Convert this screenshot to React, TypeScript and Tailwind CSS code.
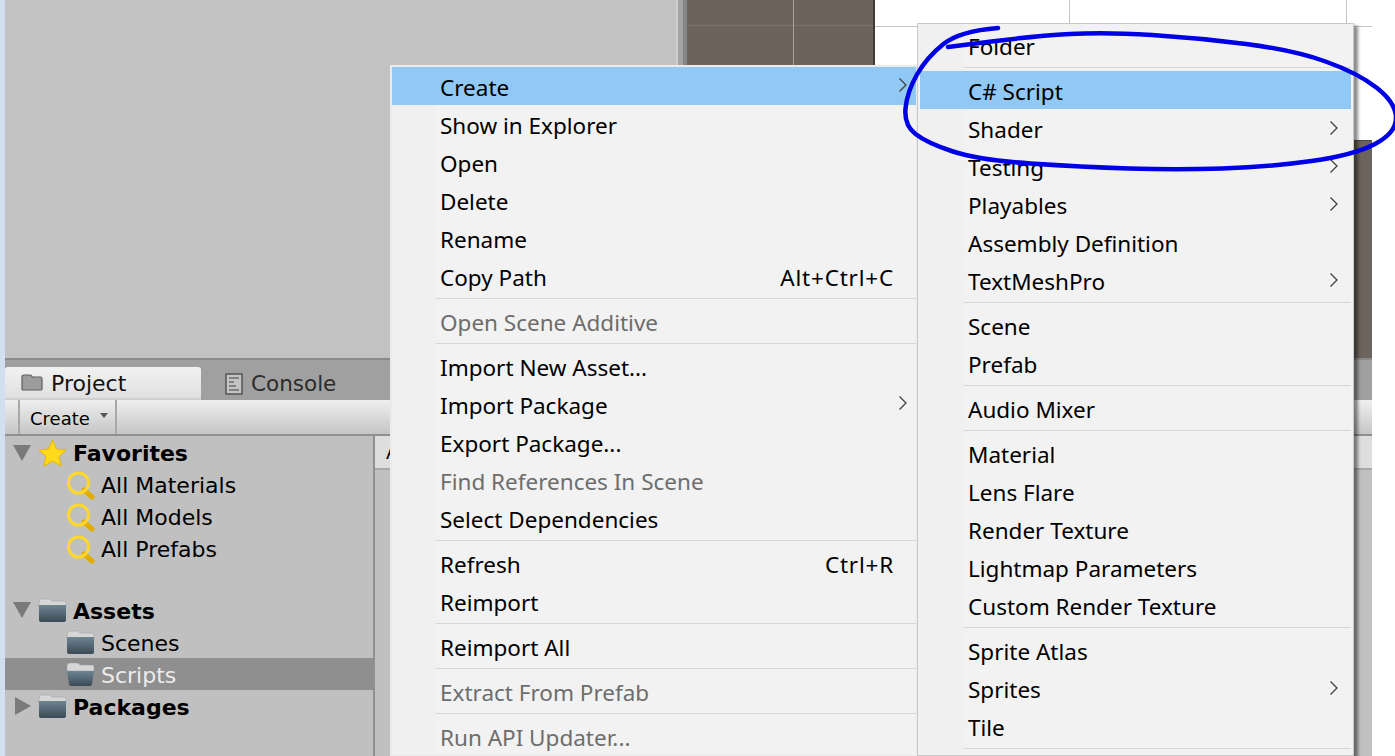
import React from 'react';

type MenuItem = { label?: string; shortcut?: string; arrow?: boolean; disabled?: boolean; active?: boolean; sep?: boolean };

const mainItems: MenuItem[] = [
    { label: 'Create', arrow: true, active: true },
    { label: 'Show in Explorer' },
    { label: 'Open' },
    { label: 'Delete' },
    { label: 'Rename' },
    { label: 'Copy Path', shortcut: 'Alt+Ctrl+C' },
    { sep: true },
    { label: 'Open Scene Additive', disabled: true },
    { sep: true },
    { label: 'Import New Asset...' },
    { label: 'Import Package', arrow: true },
    { label: 'Export Package...' },
    { label: 'Find References In Scene', disabled: true },
    { label: 'Select Dependencies' },
    { sep: true },
    { label: 'Refresh', shortcut: 'Ctrl+R' },
    { label: 'Reimport' },
    { sep: true },
    { label: 'Reimport All' },
    { sep: true },
    { label: 'Extract From Prefab', disabled: true },
    { sep: true },
    { label: 'Run API Updater...', disabled: true },
];

const subItems: MenuItem[] = [
    { label: 'Folder' },
    { sep: true },
    { label: 'C# Script', active: true },
    { label: 'Shader', arrow: true },
    { label: 'Testing', arrow: true },
    { label: 'Playables', arrow: true },
    { label: 'Assembly Definition' },
    { label: 'TextMeshPro', arrow: true },
    { sep: true },
    { label: 'Scene' },
    { label: 'Prefab' },
    { sep: true },
    { label: 'Audio Mixer' },
    { sep: true },
    { label: 'Material' },
    { label: 'Lens Flare' },
    { label: 'Render Texture' },
    { label: 'Lightmap Parameters' },
    { label: 'Custom Render Texture' },
    { sep: true },
    { label: 'Sprite Atlas' },
    { label: 'Sprites', arrow: true },
    { label: 'Tile' },
    { sep: true },
];

// hand drawn circle round the C# Script entry, in page coordinates
const scribble: [number, number][] = [
    [998, 28], [960, 31], [927, 57], [907, 92], [904, 125], [927, 143], [979, 160], [1082, 167],
    [1176, 170], [1269, 167], [1354, 155], [1396, 133], [1396, 103], [1358, 73], [1293, 50],
    [1199, 38], [1105, 32], [1035, 36], [948, 47],
];

const scribblePath = () => {
    let d = `M${scribble[0][0]} ${scribble[0][1]}`;
    for (let i = 1; i < scribble.length - 1; i++) {
        const [x, y] = scribble[i];
        const [nx, ny] = scribble[i + 1];
        d += ` Q${x} ${y} ${(x + nx) / 2} ${(y + ny) / 2}`;
    }
    const last = scribble[scribble.length - 1];
    return `${d} L${last[0]} ${last[1]}`;
};

const Chevron = () => (
    <svg width="10" height="16" viewBox="0 0 10 16" fill="none" stroke="#404040" strokeWidth="1.3">
        <path d="M1.5 1.5 L8 8 L1.5 14.5" />
    </svg>
);

const Menu: React.FC<{ items: MenuItem[]; className: string; arrowClass: string }> = ({ items, className, arrowClass }) => (
    <div className={className}>
        {items.map((item, i) =>
            item.sep ? (
                <div key={i} className="h-[7px] flex items-center ml-[44px]">
                    <div className="h-px w-full bg-[#d7d7d7]" />
                </div>
            ) : (
                <div
                    key={i}
                    className={`relative h-[38px] pl-12 flex items-center text-[22.5px] leading-none ${item.active ? 'bg-[#90c8f6]' : ''} ${item.disabled ? 'text-[#6d6d6d]' : 'text-black'}`}
                >
                    <span className="relative top-[2px]">{item.label}</span>
                    {item.shortcut && <span className="absolute right-[22px] top-[10px] tracking-[0.8px]">{item.shortcut}</span>}
                    {item.arrow && (
                        <span className={arrowClass}>
                            <Chevron />
                        </span>
                    )}
                </div>
            )
        )}
    </div>
);

const FolderIcon: React.FC<{ id: string; open?: boolean }> = ({ id, open }) => (
    <svg width="29" height="25" viewBox="0 0 29 25" className="shrink-0">
        <defs>
            <linearGradient id={id} x1="0" y1="0" x2="0" y2="1">
                <stop offset="0" stopColor="#6d8594" />
                <stop offset="1" stopColor="#3c4a54" />
            </linearGradient>
        </defs>
        <path d="M1 4 Q1 1 4 1 H11 Q13 1 14 3 H26 Q28 3 28 5 V9 H1 Z" fill="#d6d6d6" stroke="#9a9a9a" strokeWidth="0.5" />
        {open ? (
            <path d="M1 9 H28 L26 22 Q26 24 24 24 H5 Q3 24 3 22 Z" fill={`url(#${id})`} />
        ) : (
            <path d="M1 7 H28 V22 Q28 24 26 24 H3 Q1 24 1 22 Z" fill={`url(#${id})`} />
        )}
    </svg>
);

const SearchIcon = () => (
    <svg width="29" height="29" viewBox="0 0 29 29" fill="none" className="shrink-0">
        <path d="M18 19 L26 26" stroke="#e0ac00" strokeWidth="5" strokeLinecap="round" />
        <circle cx="12.5" cy="12" r="10" stroke="#ffd82a" strokeWidth="3" />
    </svg>
);

const StarIcon = () => (
    <svg width="29" height="28" viewBox="0 0 29 28" className="shrink-0">
        <path d="M14.5 1 L18.6 10 L28 11 L21 17.6 L23.2 27 L14.5 22.2 L5.8 27 L8 17.6 L1 11 L10.4 10 Z" fill="#ffd91c" stroke="#e8b400" strokeWidth="1" />
    </svg>
);

const TriDown = () => (
    <svg width="18" height="16" viewBox="0 0 18 16" className="shrink-0">
        <path d="M0 0 H18 L9 16 Z" fill="#7a7a7a" />
    </svg>
);

const TriRight = () => (
    <svg width="16" height="18" viewBox="0 0 16 18" className="ml-[2px] shrink-0">
        <path d="M0 0 L16 9 L0 18 Z" fill="#7a7a7a" />
    </svg>
);

const TreeRow: React.FC<{ indent: number; tri?: React.ReactNode; icon: React.ReactNode; label: string; bold?: boolean; selected?: boolean; lower?: boolean }> = ({ indent, tri, icon, label, bold, selected, lower }) => (
    <div className={`h-8 flex items-center ${selected ? 'bg-[#8f8f8f] text-[#ececec]' : 'text-black'}`}>
        <div className={`${indent === 0 ? 'w-[33px] pl-2' : 'w-[61px]'} shrink-0 flex items-center`}>{tri}</div>
        {icon}
        <span className={`relative text-[22px] leading-none ml-[6px] ${lower ? 'top-[2px]' : 'top-px'} ${bold ? 'font-bold' : ''}`}>{label}</span>
    </div>
);

export default function App() {
    return (
        <div className="relative w-[1395px] h-[756px] overflow-hidden flex bg-white font-['DejaVu_Sans',sans-serif]">
            <div className="w-[5px] shrink-0 bg-[#d3deef]" />
            <div className="w-[1367px] shrink-0 flex flex-col">
                {/* top: scene and game views */}
                <div className="h-[358px] shrink-0 flex">
                    <div className="w-[673px] shrink-0 bg-[#c2c2c2] border-r-2 border-[#d0d0d0]" />
                    <div className="w-[5px] shrink-0 bg-[#a3a3a3]" />
                    <div className="w-[4px] shrink-0 bg-[#858585]" />
                    <div className="relative w-[188px] shrink-0 bg-[#6b635c] border-r-2 border-[#3f3b38]">
                        <div className="h-[26px] border-b border-[#7a736d]" />
                        <div className="absolute left-[106px] top-0 bottom-0 w-px bg-[#a8a4a0]" />
                    </div>
                    <div className="flex-1 flex flex-col">
                        <div className="relative h-[140px] bg-white">
                            <div className="h-[27px] border-b border-[#c4c4c4]" />
                            <div className="absolute left-[194px] top-0 h-[27px] w-px bg-[#c4c4c4]" />
                            <div className="absolute left-[471px] top-0 h-[27px] w-px bg-[#c4c4c4]" />
                        </div>
                        <div className="flex-1 bg-[#6b635c] border-t border-[#4d4844]" />
                    </div>
                </div>
                {/* tab strip */}
                <div className="h-[42px] shrink-0 bg-[#a0a0a0] border-t-2 border-[#8a8a8a] flex items-end">
                    <div className="w-[196px] h-[33px] rounded-t-[3px] bg-linear-to-b from-[#f2f2f2] to-[#e0e0e0] flex items-center pl-[16px] border-b-2 border-[#cfcfcf]">
                        <svg width="22" height="17" viewBox="0 0 22 17">
                            <path d="M1 3 Q1 1 3 1 H9 Q11 1 11 3 H20 Q21 3 21 5 V15 Q21 16 20 16 H2 Q1 16 1 15 Z" fill="#9c9c9c" stroke="#5f5f5f" strokeWidth="1.2" />
                        </svg>
                        <span className="relative top-px ml-[8px] text-[22px] leading-none text-[#111]">Project</span>
                    </div>
                    <div className="h-[33px] flex items-center pl-[24px]">
                        <svg width="18" height="22" viewBox="0 0 18 22">
                            <rect x="1" y="1" width="16" height="20" fill="#c4c4c4" stroke="#4e4e4e" strokeWidth="1.4" />
                            <path d="M4 5 H14 M4 9 H9 M4 13 H11 M4 17 H14" stroke="#6a6a6a" strokeWidth="1.4" />
                        </svg>
                        <span className="ml-[8px] text-[21.5px] leading-none text-[#2b2b2b]">Console</span>
                    </div>
                </div>
                {/* toolbar */}
                <div className="h-[36px] shrink-0 flex bg-linear-to-b from-[#efefef] to-[#c6c6c6] border-b-2 border-[#8f8f8f]">
                    <div className="ml-[13px] w-[99px] border-x-2 border-[#a8a8a8] flex items-center pl-[10px] text-[18px] leading-none text-black">
                        <span className="relative top-[2px]">Create</span>
                        <svg width="8" height="5" viewBox="0 0 10 6" className="ml-[10px] -mt-[4px]">
                            <path d="M0 0 H10 L5 6 Z" fill="#555" />
                        </svg>
                    </div>
                </div>
                {/* project browser */}
                <div className="flex-1 flex bg-[#c0c0c0]">
                    <div className="w-[368px] shrink-0 pt-px">
                        <TreeRow indent={0} tri={<TriDown />} icon={<StarIcon />} label="Favorites" bold />
                        <TreeRow indent={1} icon={<SearchIcon />} label="All Materials" />
                        <TreeRow indent={1} icon={<SearchIcon />} label="All Models" />
                        <TreeRow indent={1} icon={<SearchIcon />} label="All Prefabs" />
                        <div className="h-[29px]" />
                        <TreeRow indent={0} tri={<TriDown />} icon={<FolderIcon id="folder-assets" />} label="Assets" bold lower />
                        <TreeRow indent={1} icon={<FolderIcon id="folder-scenes" />} label="Scenes" lower />
                        <TreeRow indent={1} icon={<FolderIcon id="folder-scripts" open />} label="Scripts" selected lower />
                        <TreeRow indent={0} tri={<TriRight />} icon={<FolderIcon id="folder-packages" />} label="Packages" bold lower />
                    </div>
                    <div className="flex-1 border-l-2 border-[#8f8f8f]">
                        <div className="h-[34px] bg-[#dedede] border-b-2 border-[#a8a8a8] pl-[11px] flex items-center text-[18px] text-black">Assets</div>
                    </div>
                </div>
            </div>

            {/* context menus */}
            <div className="absolute left-[390px] top-[65px] font-['Noto_Sans',sans-serif]">
                <Menu
                    items={mainItems}
                    arrowClass="absolute right-[8px] top-[10px]"
                    className="w-[528px] border-2 border-[#ebebeb] bg-[linear-gradient(to_right,#f0f0f0_44px,#f2f2f2_44px)]"
                />
            </div>
            <div className="absolute left-[917px] top-[23px] font-['Noto_Sans',sans-serif] shadow-[4px_3px_3px_rgba(0,0,0,0.45)]">
                <Menu
                    items={subItems}
                    arrowClass="absolute right-[12px] top-[11px]"
                    className="w-[437px] h-[733px] border border-[#c8c8c8] p-[2px] bg-[linear-gradient(to_right,#f0f0f0_46px,#f2f2f2_46px)]"
                />
            </div>

            {/* annotation */}
            <svg width="1395" height="756" viewBox="0 0 1395 756" fill="none" className="absolute left-0 top-0 pointer-events-none">
                <path d={scribblePath()} stroke="#0000e6" strokeWidth="4.5" strokeLinecap="round" strokeLinejoin="round" />
            </svg>
        </div>
    );
}
